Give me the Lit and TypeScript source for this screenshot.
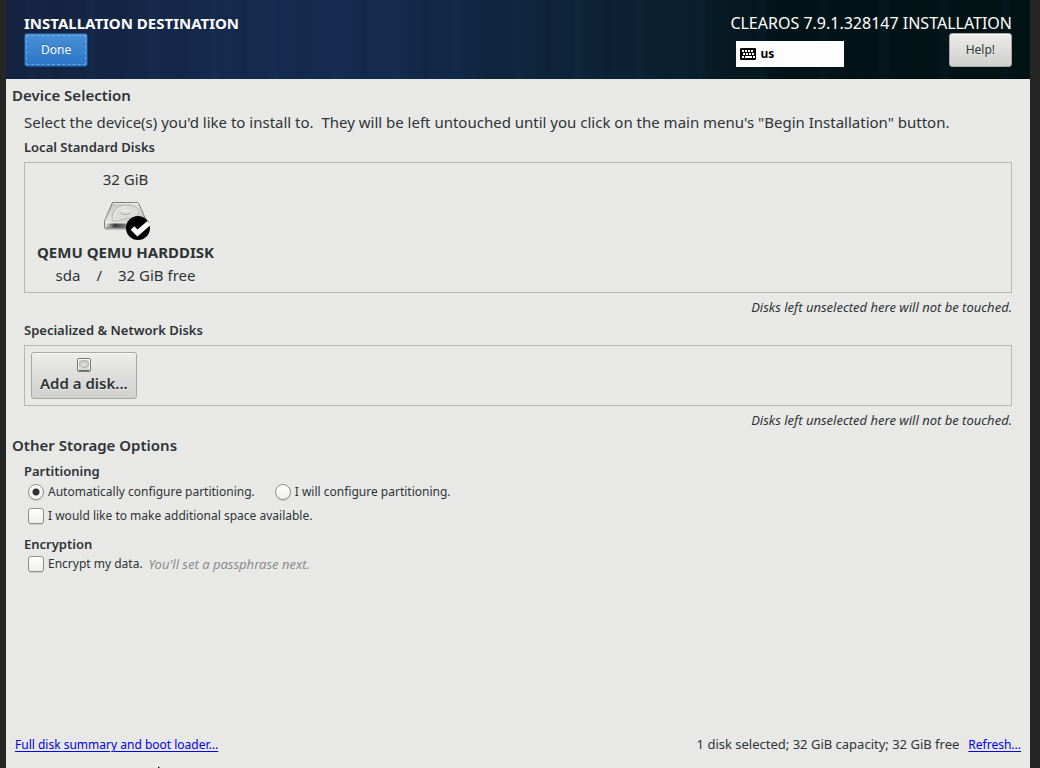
import { LitElement, html, css, svg } from "lit";
import { customElement, state } from "lit/decorators.js";

const driveIcon = html`<svg class="drive" width="48" height="48" viewBox="0 0 48 48" aria-hidden="true">
  <defs>
    <linearGradient id="top" x1="0" y1="0" x2="1" y2="1">
      <stop offset="0" stop-color="#bcbcba" /><stop offset=".5" stop-color="#e6e6e4" /><stop offset="1" stop-color="#b6b6b4" />
    </linearGradient>
    <linearGradient id="front" x1="0" y1="0" x2="1" y2="0">
      <stop offset="0" stop-color="#f4f4f4" /><stop offset=".14" stop-color="#85888a" /><stop offset=".25" stop-color="#33383a" /><stop offset=".5" stop-color="#777b7d" /><stop offset="1" stop-color="#d5d5d5" />
    </linearGradient>
  </defs>
  <path d="M1 34 H40 V37 H2Z" fill="#8c8c8a" opacity=".45" />
  <path d="M1.500 28 L9 10.500 Q9.400 9.500 10.500 9.500 H34 Q35.200 9.500 35.700 10.500 L43.500 28 V34 Q43.500 35 42.500 35 H2.500 Q1.500 35 1.500 34Z" fill="url(#front)" stroke="#7d7d7b" />
  <path d="M2 28.500 L9.600 10.600 H35 L43 28.500 Q42 30 40 30 H4 Q2.500 30 2 28.500Z" fill="url(#top)" />
  <path d="M9.800 10.600 H35 M3 30 H40" stroke="#fff" opacity=".85" />
  <path d="M9 26 C9 17 15 12 23 12 C31 12 37 15 36 20 C34 26 25 24 18 27 C13 29 9 29 9 26Z" fill="#dcdcda" stroke="#b4b4b2" />
  <path d="M11 25 C12 17 17 14 23 14" fill="none" stroke="#ededeb" />
  <path d="M18 19 q0 2.500 4.500 2.500 q4.500 0 4.500 -2.500" fill="none" stroke="#a0a09e" />
  <path d="M18 19 q1 -1.500 4.500 -1.500 q3.500 0 4.500 1.500" fill="none" stroke="#f5f5f3" />
  <circle cx="35" cy="35" r="12" fill="#000" />
  <path d="M29.500 35 L34.500 40 L46 30" fill="none" stroke="#fff" stroke-width="5" />
</svg>`;

const smallDriveIcon = html`<svg width="16" height="16" viewBox="0 0 16 16" aria-hidden="true">
  <rect x="1.500" y="1.500" width="13" height="13" rx="1.500" fill="#d8d8d6" stroke="#777b7b" />
  <path d="M2.500 13 V2.500 H13.500 V13" fill="none" stroke="#f7f7f7" />
  <ellipse cx="8" cy="7" rx="4.500" ry="3.300" fill="#d0d0ce" stroke="#aaa" />
  <path d="M5 11 L8 7.500 L10 8" stroke="#f8f8f8" fill="none" />
  <path d="M3 13.500 H13" stroke="#626869" />
</svg>`;

const keys = [
  [2, 2], [5, 2], [8, 2], [11, 2],
  [3, 5], [6, 5], [9, 5], [12, 5],
  [2, 8], [13, 8],
];
const keyboardIcon = html`<svg width="16" height="12" viewBox="0 0 16 12" aria-hidden="true">
  <rect width="16" height="12" rx="1" fill="#000" />
  ${keys.map(([x, y]) => svg`<rect x=${x} y=${y} width="2" height="2" fill="#fff" />`)}
  <rect x="5" y="8" width="7" height="2" fill="#fff" />
</svg>`;

@customElement("app-root")
export class AppRoot extends LitElement {
  @state() private mode = "auto";

  static styles = css`
    :host {
      display: block;
      --ink: #2e3436;
      --line: #b6b6b3;
      color: var(--ink);
      font: 12px/18px "Noto Sans", "Open Sans", sans-serif;
    }
    * { box-sizing: border-box; }
    h1, h2, h3, p { margin: 0; font-size: inherit; }
    .window {
      display: flex;
      flex-direction: column;
      min-height: 100vh;
      padding: 0 10px 0 6px;
      background: #262626;
      position: relative;
    }
    .header {
      display: flex;
      justify-content: space-between;
      padding: 13px 18px 12px;
      color: #fff;
      background:
        repeating-linear-gradient(90deg, #ffffff00 0 17px, #3a70a80a 23px 25px, #ffffff00 31px 44px, #0000000c 52px 55px, #ffffff00 61px),
        linear-gradient(90deg, #14233f 0, #15294c 20%, #142b4f 35%, #10263f 48%, #0a2030 65%, #021418 76%, #021316 100%);
    }
    .large { font-size: 15px; line-height: 20px; }
    .title { font-weight: 700; }
    .product { font-size: 16px; line-height: 20px; }
    .side { display: flex; flex-direction: column; }
    .tools { display: flex; justify-content: space-between; align-items: flex-end; padding-left: 6px; }
    button { font: inherit; color: inherit; cursor: pointer; }
    .button {
      height: 34px;
      padding: 0 16px;
      border: 1px solid #a6a6a2;
      border-radius: 3px;
      background: linear-gradient(#ececeb, #d0d0cd);
      color: var(--ink);
      box-shadow: inset 0 1px #fafafa;
      text-shadow: 0 1px #fff8;
    }
    .done {
      align-self: flex-start;
      border-color: #1c5187;
      background: linear-gradient(#4a90d9, #2a76c6);
      color: #fff;
      box-shadow: none;
      text-shadow: 0 -1px #0004;
      outline: 1px dashed #8fbbeaaa;
      outline-offset: -3px;
    }
    .layout {
      display: flex;
      align-items: center;
      gap: 4px;
      width: 108px;
      height: 26px;
      padding: 0 4px;
      border: 0;
      background: #fdfdfd;
      color: #000;
      font-weight: 700;
    }
    .main {
      flex: 1;
      display: flex;
      flex-direction: column;
      padding: 6px 6px 0;
      background: #e8e8e6;
    }
    .heading { font-weight: 600; }
    .section { display: flex; flex-direction: column; padding: 7px 12px 0; }
    .subheading { font-size: 13px; font-weight: 600; line-height: 18px; }
    .intro { padding-bottom: 6px; }
    .disks { margin: 6px 0 5px; border: 1px solid var(--line); padding: 6px; display: flex; }
    .disk {
      display: flex;
      flex-direction: column;
      align-items: center;
      padding: 0 6px 1px;
      border: 0;
      background: none;
      line-height: 20px;
      gap: 3px;
    }
    .disk .drive { margin: 1px 0 -2px 2px; }
    .name { font-weight: 700; }
    .detail { display: flex; gap: 16px; }
    .add {
      display: flex;
      flex-direction: column;
      align-items: center;
      height: 47px;
      padding: 4px 8px;
      font-weight: 600;
    }
    .note { text-align: right; font-style: italic; font-size: 13px; }
    .specialized { margin-top: 5px; }
    .storage { margin-top: 6px; }
    .row { display: flex; gap: 20px; padding: 3px 4px; }
    .options { padding-bottom: 5px; }
    .encryption { margin-top: 5px; }
    .encryption-row { padding-top: 2px; }
    label { display: flex; align-items: center; gap: 4px; }
    input {
      appearance: none;
      width: 16px;
      height: 16px;
      margin: 0;
      border: 1px solid #8f918f;
      border-radius: 3px;
      background: linear-gradient(#fff, #ededeb);
      box-shadow: 0 1px #0002;
    }
    input[type="radio"] { border-radius: 50%; }
    input[type="radio"]:checked { background: radial-gradient(circle, var(--ink) 0 3px, #f5f5f4 4px); }
    input[type="checkbox"]:checked { background: var(--ink); }
    .hint { font-style: italic; font-size: 13px; color: #8b8e8d; padding-left: 2px; }
    .footer {
      display: flex;
      justify-content: space-between;
      align-items: baseline;
      margin-top: auto;
      padding: 0 3px 14px;
    }
    .summary { display: flex; align-items: baseline; gap: 9px; }
    .totals { font-size: 13px; }
    a { color: #0000ee; text-underline-offset: 2px; }
    .pointer { position: absolute; left: 154px; bottom: 0; }
  `;

  render() {
    return html`<div class="window">
      <header class="header">
        <div class="side">
          <h1 class="large title">INSTALLATION DESTINATION</h1>
          <button class="button done">Done</button>
        </div>
        <div class="side">
          <div class="product">CLEAROS 7.9.1.328147 INSTALLATION</div>
          <div class="tools">
            <button class="layout" aria-label="Keyboard layout us">${keyboardIcon}<span>us</span></button>
            <button class="button">Help!</button>
          </div>
        </div>
      </header>
      <main class="main">
        <h2 class="large heading">Device Selection</h2>
        <section class="section">
          <p class="large intro">Select the device(s) you'd like to install to.&nbsp; They will be left untouched until you click on the main menu's "Begin Installation" button.</p>
          <h3 class="subheading">Local Standard Disks</h3>
          <div class="disks">
            <button class="disk large" aria-pressed="true">
              <span>32 GiB</span>
              ${driveIcon}
              <span class="name">QEMU QEMU HARDDISK</span>
              <span class="detail"><span>sda</span><span>/</span><span>32 GiB free</span></span>
            </button>
          </div>
          <p class="note">Disks left unselected here will not be touched.</p>
          <h3 class="subheading specialized">Specialized &amp; Network Disks</h3>
          <div class="disks">
            <button class="button add large">${smallDriveIcon}<span>Add a disk...</span></button>
          </div>
          <p class="note">Disks left unselected here will not be touched.</p>
        </section>
        <h2 class="large heading storage">Other Storage Options</h2>
        <section class="section">
          <h3 class="subheading">Partitioning</h3>
          <div class="row">
            <label><input type="radio" name="mode" ?checked=${this.mode === "auto"} @change=${() => (this.mode = "auto")} />Automatically configure partitioning.</label>
            <label><input type="radio" name="mode" ?checked=${this.mode === "manual"} @change=${() => (this.mode = "manual")} />I will configure partitioning.</label>
          </div>
          <div class="row options">
            <label><input type="checkbox" />I would like to make additional space available.</label>
          </div>
          <h3 class="subheading encryption">Encryption</h3>
          <div class="row encryption-row">
            <label><input type="checkbox" />Encrypt my data.<span class="hint">You'll set a passphrase next.</span></label>
          </div>
        </section>
        <footer class="footer">
          <a href="#summary">Full disk summary and boot loader...</a>
          <div class="summary"><span class="totals">1 disk selected; 32 GiB capacity; 32 GiB free</span><a href="#refresh">Refresh...</a></div>
        </footer>
      </main>
      <svg class="pointer" width="8" height="4" viewBox="0 0 8 4" aria-hidden="true">
        <path d="M3 0 L7 4 H3Z" fill="#fff" /><path d="M4 2 L6 4 H4Z" fill="#000" />
      </svg>
    </div>`;
  }
}
